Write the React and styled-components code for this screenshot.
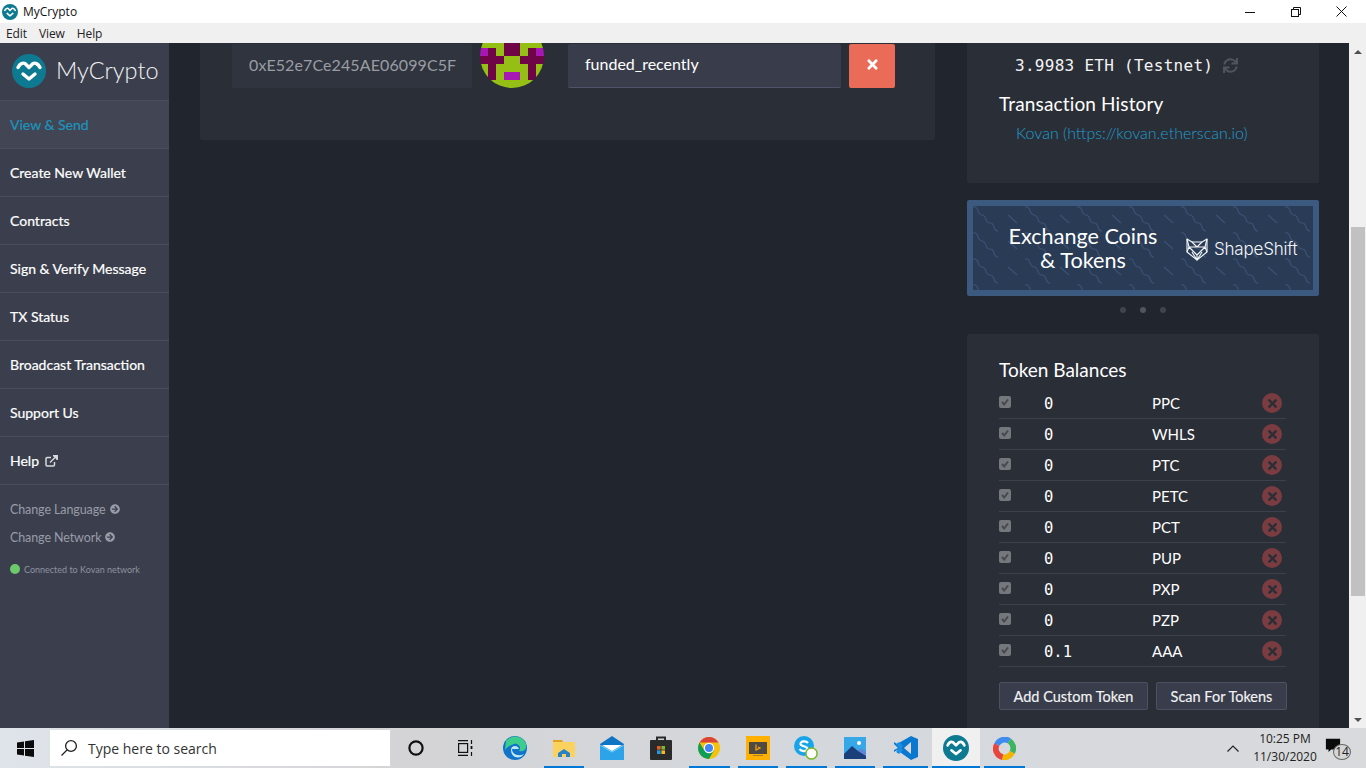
import React from "react";
import styled, { createGlobalStyle } from "styled-components";
import { FaTimes, FaSync, FaArrowCircleRight } from "react-icons/fa";

const GlobalStyle = createGlobalStyle`
  html, body {
    margin: 0;
    padding: 0;
    overflow: hidden;
    font-family: "Lato", "Liberation Sans", sans-serif;
  }
  * {
    box-sizing: border-box;
  }
`;

const Screen = styled.div`
  width: 1366px;
  height: 768px;
  display: flex;
  flex-direction: column;
  overflow: hidden;
  background: #21252d;
`;

const TitleBar = styled.div`
  height: 23px;
  flex: none;
  display: flex;
  align-items: center;
  background: #fff;
  padding: 0 2px 0 2px;
  color: #111;
  font: 12px "Open Sans", "Noto Sans", sans-serif;
`;

const TitleText = styled.span`
  margin-left: 5px;
  flex: 1;
`;

const WinButton = styled.div`
  width: 45.5px;
  height: 23px;
  display: flex;
  align-items: center;
  justify-content: center;
`;

const MenuBar = styled.div`
  height: 20px;
  flex: none;
  display: flex;
  align-items: center;
  gap: 12px;
  padding-left: 6px;
  background: #f0f0f0;
  color: #222;
  font: 12px "Open Sans", "Noto Sans", sans-serif;
  letter-spacing: -0.1px;
`;

const Body = styled.div`
  flex: 1;
  min-height: 0;
  display: flex;
`;

const Sidebar = styled.nav`
  width: 169px;
  flex: none;
  background: #3b3f4d;
`;

const Brand = styled.div`
  height: 58px;
  display: flex;
  align-items: center;
  gap: 10px;
  padding: 0 0 4px 12px;
  border-bottom: 1px solid #4a4e5c;
  color: #f2f2f4;
  font-size: 23.5px;
  font-weight: 300;
  svg {
    margin-top: 3px;
  }
`;

const NavItem = styled.div`
  height: 48px;
  display: flex;
  align-items: center;
  gap: 6px;
  padding-left: 10px;
  border-bottom: 1px solid #4a4e5c;
  font-size: 14px;
  -webkit-text-stroke: 0.2px currentColor;
  color: ${(p) => (p.$active ? "#1d94bd" : "#fff")};
  background: ${(p) => (p.$active ? "#424654" : "transparent")};
`;

const NavExtras = styled.div`
  padding: 10px 0 0 10px;
`;

const ExtraLink = styled.div`
  height: 28px;
  display: flex;
  align-items: center;
  gap: 4px;
  font-size: 12.5px;
  letter-spacing: -0.1px;
  color: #989ca8;
`;

const Status = styled.div`
  margin-top: 8px;
  height: 20px;
  display: flex;
  align-items: center;
  gap: 4px;
  font-size: 9px;
  color: #8e929f;
`;

const StatusDot = styled.span`
  width: 10px;
  height: 10px;
  border-radius: 50%;
  background: #6cc96c;
`;

const Main = styled.main`
  flex: 1;
  min-width: 0;
  overflow: hidden;
  padding: 0 14px 0 31px;
`;

const ScrollContent = styled.div`
  margin-top: -100px;
  display: grid;
  grid-template-columns: 735px 352px;
  column-gap: 32px;
  align-items: start;
`;

const Card = styled.section`
  background: #2a2e37;
  border-radius: 2px;
`;

const AddressCard = styled(Card)`
  padding: 81px 40px 52px 32px;
  display: flex;
  align-items: flex-end;
`;

const Field = styled.div`
  height: 44px;
  display: flex;
  align-items: center;
  padding-bottom: 4px;
  border-radius: 2px;
  font-size: 16px;
`;

const AddressField = styled(Field)`
  width: 240px;
  padding-left: 17px;
  background: #30343e;
  color: #9a9da3;
  letter-spacing: 0.1px;
  white-space: nowrap;
  overflow: hidden;
`;

const LabelField = styled(Field)`
  width: 273px;
  margin-left: 24px;
  padding-left: 17px;
  background: #393d4b;
  border-bottom: 1px solid #50546a;
  color: #fff;
`;

const Identicon = styled.svg`
  width: 64px;
  height: 64px;
  margin-left: 8px;
  flex: none;
  display: block;
`;

const RemoveButton = styled.button`
  width: 46px;
  height: 44px;
  margin-left: 8px;
  padding: 0 0 4px;
  border: 0;
  border-radius: 2px;
  background: #ea6b57;
  color: #fff;
  font-size: 15px;
  display: flex;
  align-items: center;
  justify-content: center;
`;

const Aside = styled.div`
  display: flex;
  flex-direction: column;
`;

const BalanceCard = styled(Card)`
  padding: 108px 32px 39px;
`;

const Balance = styled.div`
  height: 28px;
  padding-left: 16px;
  display: flex;
  align-items: center;
  gap: 10px;
  color: #f4f4f4;
  font: 16px "DejaVu Sans Mono", "Liberation Mono", monospace;
  letter-spacing: 0.28px;
  white-space: nowrap;
  svg {
    color: #50545d;
    font-size: 15px;
  }
`;

const Heading = styled.h3`
  margin: 0;
  color: #fff;
  font-size: 19px;
  font-weight: 400;
  line-height: 24px;
`;

const HistoryHeading = styled(Heading)`
  margin-top: 13px;
  letter-spacing: 0.15px;
`;

const ExplorerLink = styled.a`
  display: block;
  margin-top: 6px;
  padding-left: 17px;
  color: #1f9fd0;
  font-size: 16px;
  font-weight: 300;
  line-height: 22px;
`;

const Banner = styled.div`
  position: relative;
  margin-top: 17px;
  height: 96px;
  border: 6px solid #3c5a80;
  border-radius: 2px;
  background: #293b55;
  display: flex;
  align-items: center;
  overflow: hidden;
`;

const BannerPattern = styled.svg`
  position: absolute;
  inset: 0;
  width: 100%;
  height: 100%;
`;

const BannerText = styled.div`
  position: relative;
  width: 220px;
  text-align: center;
  color: #fff;
  font-size: 21.6px;
  line-height: 24px;
`;

const ShapeShift = styled.div`
  position: relative;
  display: flex;
  align-items: center;
  gap: 5px;
  margin: 2px 0 0 -8px;
  color: #f4f6f8;
  font: 300 17px "Inter", "Open Sans", sans-serif;
  letter-spacing: -0.2px;
`;

const Dots = styled.div`
  height: 38px;
  padding-bottom: 10px;
  display: flex;
  justify-content: center;
  align-items: center;
  gap: 14px;
`;

const Dot = styled.span`
  width: 6px;
  height: 6px;
  border-radius: 50%;
  background: ${(p) => (p.$on ? "#50555f" : "#3f444e")};
`;

const TokenCard = styled(Card)`
  padding: 24px 32px 20px;
`;

const TokenRow = styled.div`
  height: 31px;
  width: 287px;
  display: flex;
  align-items: center;
  border-bottom: 1px solid #3d414b;
  color: #fff;
`;

const TokenBox = styled.span`
  width: 12px;
  height: 12px;
  flex: none;
  margin-top: -2px;
  border-radius: 2px;
  background: #74777c;
  color: #464a50;
  display: flex;
  align-items: center;
  justify-content: center;
`;

const TokenValue = styled.span`
  width: 108px;
  margin: 1px 0 0 33px;
  font: 15.5px "DejaVu Sans Mono", "Liberation Mono", monospace;
`;

const TokenSymbol = styled.span`
  flex: 1;
  font-size: 15px;
`;

const TokenRemove = styled.span`
  width: 20px;
  height: 20px;
  margin-right: 4px;
  border-radius: 50%;
  background: #7a3c40;
  color: #2a2e37;
  font-size: 13px;
  display: flex;
  align-items: center;
  justify-content: center;
`;

const TokenHeading = styled(Heading)`
  margin-bottom: 6px;
`;

const TokenActions = styled.div`
  display: flex;
  gap: 8px;
  margin-top: 15px;
`;

const TokenButton = styled.button`
  height: 28px;
  width: ${(p) => p.$w}px;
  padding: 0;
  border: 1px solid #4c5060;
  border-radius: 2px;
  background: #393d4b;
  color: #f2f2f4;
  font: 14.5px "Lato", sans-serif;
  -webkit-text-stroke: 0.15px currentColor;
`;

const ScrollBar = styled.div`
  width: 17px;
  flex: none;
  display: flex;
  flex-direction: column;
  background: #f0f0f0;
`;

const ScrollArrow = styled.div`
  height: 17px;
  flex: none;
  display: flex;
  align-items: center;
  justify-content: center;
  &::after {
    content: "";
    border-left: 4px solid transparent;
    border-right: 4px solid transparent;
    ${(p) => (p.$down ? "border-top: 4px solid #505050;" : "border-bottom: 4px solid #505050;")}
  }
`;

const ScrollTrack = styled.div`
  flex: 1;
  padding: 167px 1px 0 2px;
`;

const ScrollThumb = styled.div`
  height: 369px;
  background: #c1c1c1;
`;

const TaskBar = styled.footer`
  height: 40px;
  flex: none;
  display: flex;
  align-items: stretch;
  background: linear-gradient(90deg, #dfe4ea 0%, #d4d4d6 30%, #d4d8dd 60%, #d9dadc 100%);
  font-family: "Open Sans", "Noto Sans", sans-serif;
`;

const StartButton = styled.div`
  width: 50px;
  flex: none;
  display: flex;
  align-items: center;
  justify-content: center;
`;

const SearchBox = styled.div`
  width: 340px;
  margin: 2px 0;
  flex: none;
  display: flex;
  align-items: center;
  gap: 10px;
  padding-left: 10px;
  background: #fff;
  color: #333;
  font-size: 14px;
`;

const TaskSlot = styled.div`
  width: ${(p) => p.$w || 48.5}px;
  flex: none;
  position: relative;
  display: flex;
  align-items: center;
  justify-content: center;
  background: ${(p) => (p.$focus ? "#f0f0f0" : "transparent")};
  &::after {
    content: "";
    display: ${(p) => (p.$run ? "block" : "none")};
    position: absolute;
    bottom: 0;
    left: ${(p) => (p.$focus ? 0 : 4)}px;
    right: ${(p) => (p.$focus ? 0 : 4)}px;
    height: 2px;
    background: #0078d7;
  }
`;

const TaskGroup = styled.div`
  display: flex;
  margin-left: ${(p) => p.$gap || 0}px;
`;

const Tray = styled.div`
  margin-left: auto;
  display: flex;
  align-items: center;
  padding-right: 17px;
  color: #222;
`;

const Clock = styled.div`
  width: 72px;
  margin: 0 4px 0 10px;
  text-align: center;
  font-size: 12px;
  line-height: 18px;
`;

const Notify = styled.div`
  position: relative;
  width: 24px;
  height: 24px;
`;

const NotifyBadge = styled.span`
  position: absolute;
  right: -2px;
  bottom: 0;
  width: 18px;
  height: 16px;
  border: 1px solid #666;
  border-radius: 50%;
  background: #d6d6d6;
  font-size: 12px;
  line-height: 14px;
  text-align: center;
`;

const ExternalIcon = () => (
  <svg width="13" height="12" viewBox="0 0 13 12" fill="none" stroke="#d8d9de" strokeWidth="1.5">
    <path d="M6 2.5H2.2Q1 2.5 1 3.7V9.8Q1 11 2.2 11H8.3Q9.5 11 9.5 9.8V7" />
    <path d="M5 7.5L11 1.5" />
    <path d="M8 .8H12.2V5" fill="#d8d9de" />
  </svg>
);

const Logo = ({ size = 34 }) => (
  <svg width={size} height={size} viewBox="0 0 34 34">
    <circle cx="17" cy="17" r="17" fill="#0e7a92" />
    <path
      d="M6 13.500C8 9.500 11 8.500 13 9.500L17 13.500L21 9.500C23 8.500 26 9.500 28 13.500"
      fill="none"
      stroke="#fff"
      strokeWidth="3.4"
      strokeLinecap="round"
      strokeLinejoin="round"
    />
    <path d="M11 20L17 25L23 20" fill="none" stroke="#fff" strokeWidth="3.4" strokeLinecap="round" strokeLinejoin="round" />
  </svg>
);

// g green, d dark, m magenta
const identiconRows = ["gggggggg", "gggddggg", "gggddggg", "mdgddgdm", "dddggddd", "gdggggdg", "gdgmmgdg", "gggggggg"];
const identiconColors = { g: "#95bf14", d: "#6f0447", m: "#a617b3" };

const IdenticonImage = () => (
  <Identicon viewBox="0 0 64 64">
    <defs>
      <clipPath id="identicon-clip">
        <circle cx="32" cy="32" r="32" />
      </clipPath>
    </defs>
    <g clipPath="url(#identicon-clip)" shapeRendering="crispEdges">
      {identiconRows.map((row, y) =>
        row.split("").map((c, x) => (
          <rect key={x + "-" + y} x={x * 8} y={y * 8} width="8" height="8" fill={identiconColors[c]} />
        ))
      )}
    </g>
  </Identicon>
);

const FoxLogo = () => (
  <svg width="24" height="24" viewBox="0 0 24 24" fill="none" stroke="#f4f6f8" strokeWidth="1.1" strokeLinejoin="round">
    <path d="M2 2L7 5H17L22 2V15L12 23L2 15Z" />
    <path d="M2 2L4 10L2 15M22 2L20 10L22 15M7 5L12 10L17 5M4 10L12 18L20 10M4 10L12 10L20 10M12 18V23M7 15L12 23L17 15" />
  </svg>
);

const WindowsIcon = () => (
  <svg width="17" height="17" viewBox="0 0 17 17" fill="#0b0b0b">
    <path d="M0 2.4L7 1.4V8H0ZM8 1.2L17 0V8H8ZM0 9H7V15.6L0 14.6ZM8 9H17V17L8 15.8Z" />
  </svg>
);

const SearchIcon = () => (
  <svg width="18" height="18" viewBox="0 0 18 18" fill="none" stroke="#222" strokeWidth="1.3">
    <circle cx="11" cy="7" r="5.4" />
    <path d="M7 11L1.5 16.5" />
  </svg>
);

const CortanaIcon = () => (
  <svg width="16" height="16" viewBox="0 0 16 16" fill="none" stroke="#111" strokeWidth="2.2">
    <circle cx="8" cy="8" r="6.6" />
  </svg>
);

const TaskViewIcon = () => (
  <svg width="16" height="16" viewBox="0 0 16 16" fill="none" stroke="#111" strokeWidth="1.2">
    <path d="M1 .6H11M1 15.4H11M14.5 0V4M14.5 12V16" />
    <rect x="1.6" y="3.6" width="9" height="8.8" />
    <rect x="13.6" y="6" width="1.8" height="3" fill="#111" stroke="none" />
  </svg>
);

const EdgeIcon = () => (
  <svg width="24" height="24" viewBox="0 0 24 24">
    <circle cx="12" cy="12" r="12" fill="#1173c9" />
    <path d="M3 5C7-1 19-2 23 8C24 14 20 16 16 15C19 11 15 7 11 8C7 9 4 11 2 14Z" fill="#3ccd8c" />
    <path d="M8 14C8 9 15 9 16 13H9C9 18 15 21 21 18C17 24 8 22 8 14Z" fill="#bfe9f5" />
  </svg>
);

const FolderIcon = () => (
  <svg width="22" height="20" viewBox="0 0 22 20">
    <path d="M0 2H9L10 4H0Z" fill="#e2a420" />
    <rect y="4" width="22" height="15" fill="#fbd25e" />
    <path d="M5 15L11 11L17 15V19H13V16H9V19H5Z" fill="#2a82c9" />
  </svg>
);

const MailIcon = () => (
  <svg width="24" height="24" viewBox="0 0 24 24">
    <path d="M0 8L12 0L24 8V24H0Z" fill="#0f74c4" />
    <path d="M0 10H24V24H0Z" fill="#2da4ea" />
    <path d="M2 9H22L12 15Z" fill="#fff" />
    <path d="M0 9L12 16L24 9" fill="none" stroke="#7fd0f7" />
  </svg>
);

const StoreIcon = () => (
  <svg width="22" height="24" viewBox="0 0 22 24">
    <path d="M7 5V1.5H15V5" fill="none" stroke="#2b2b2b" strokeWidth="2" />
    <rect y="4" width="22" height="20" rx="1" fill="#2b2b2b" />
    <rect x="7" y="10" width="3.6" height="3.6" fill="#e85a2c" />
    <rect x="11.4" y="10" width="3.6" height="3.6" fill="#7ab929" />
    <rect x="7" y="14.4" width="3.6" height="3.6" fill="#1e9be0" />
    <rect x="11.4" y="14.4" width="3.6" height="3.6" fill="#f6b81c" />
  </svg>
);

const ChromeIcon = () => (
  <svg width="22" height="22" viewBox="0 0 22 22">
    <circle cx="11" cy="11" r="11" fill="#f4c20d" />
    <path d="M1.5 5.5A11 11 0 0 1 20.5 5.5H11Z" fill="#db4437" />
    <path d="M1.5 5.5A11 11 0 0 0 11 22L16 13L6 13Z" fill="#0f9d58" />
    <circle cx="11" cy="11" r="5.2" fill="#fff" />
    <circle cx="11" cy="11" r="4" fill="#4285f4" />
  </svg>
);

const BingIcon = () => (
  <svg width="24" height="24" viewBox="0 0 24 24">
    <rect width="24" height="24" fill="#ffb000" />
    <rect x="3" y="6" width="18" height="12" fill="#4d4a45" />
    <rect x="7" y="19" width="10" height="1" fill="#a9812a" />
    <path d="M10 8.500V14L14 12L12 11" fill="none" stroke="#ffa500" strokeWidth="1.2" />
  </svg>
);

const SkypeIcon = () => (
  <svg width="24" height="24" viewBox="0 0 24 24">
    <circle cx="10" cy="10" r="10" fill="#18a4e8" />
    <path d="M14 7C12 4.500 6 5 6.500 8C7 11 13.500 9.500 13.500 13C13 16 7 15.500 5.500 13" fill="none" stroke="#fff" strokeWidth="2.2" />
    <circle cx="17.500" cy="17.500" r="5.600" fill="#fff" stroke="#7ab82a" strokeWidth="1.5" />
  </svg>
);

const PhotosIcon = () => (
  <svg width="22" height="22" viewBox="0 0 22 22">
    <rect width="22" height="22" fill="#36a8e8" />
    <circle cx="15" cy="6" r="2" fill="#fff" />
    <path d="M0 17L8 9L14 14L17 12L22 17V22H0Z" fill="#1b3f7a" />
    <path d="M14 14L17 11L22 15V19Z" fill="#5f87d6" />
  </svg>
);

const VSCodeIcon = () => (
  <svg width="24" height="24" viewBox="0 0 24 24">
    <path d="M17 0L24 3V21L17 24L3 14L0 16V14L4 12L0 8V6L3 8Z" fill="#0b78cf" />
    <path d="M17 6L10 12L17 18Z" fill="#d5d9de" />
    <path d="M2 8L5 6L9 10L7 12L9 14L5 18L2 16L5 12Z" fill="#1d8fe0" />
  </svg>
);

const RingIcon = () => (
  <svg width="23" height="23" viewBox="0 0 24 24" fill="none" strokeWidth="6">
    <path d="M4 8A9 9 0 0 1 17 4" stroke="#3f8cf0" />
    <path d="M17 4A9 9 0 0 1 20 16" stroke="#3db560" />
    <path d="M20 16A9 9 0 0 1 10 21" stroke="#f4b400" />
    <path d="M10 21A9 9 0 0 1 4 8" stroke="#e8453c" />
  </svg>
);

const navItems = ["View & Send", "Create New Wallet", "Contracts", "Sign & Verify Message", "TX Status", "Broadcast Transaction", "Support Us"];

const tokens = [
  ["0", "PPC"],
  ["0", "WHLS"],
  ["0", "PTC"],
  ["0", "PETC"],
  ["0", "PCT"],
  ["0", "PUP"],
  ["0", "PXP"],
  ["0", "PZP"],
  ["0.1", "AAA"],
];

export default function App() {
  return (
    <Screen>
      <GlobalStyle />
      <TitleBar>
        <Logo size={16} />
        <TitleText>MyCrypto</TitleText>
        <WinButton>
          <svg width="10" height="10" viewBox="0 0 10 10" stroke="#111">
            <path d="M0 5.500H10" />
          </svg>
        </WinButton>
        <WinButton>
          <svg width="10" height="10" viewBox="0 0 10 10" fill="none" stroke="#111">
            <rect x=".5" y="2.500" width="7" height="7" />
            <path d="M2.500 2.500V.5H9.500V7.500H7.500" />
          </svg>
        </WinButton>
        <WinButton>
          <svg width="11" height="11" viewBox="0 0 11 11" stroke="#111">
            <path d="M.5 .5L10.500 10.500M10.500 .5L.5 10.500" />
          </svg>
        </WinButton>
      </TitleBar>
      <MenuBar>
        <span>Edit</span>
        <span>View</span>
        <span>Help</span>
      </MenuBar>
      <Body>
        <Sidebar>
          <Brand>
            <Logo />
            MyCrypto
          </Brand>
          {navItems.map((item, i) => (
            <NavItem key={item} $active={i === 0}>
              {item}
            </NavItem>
          ))}
          <NavItem>
            Help <ExternalIcon />
          </NavItem>
          <NavExtras>
            <ExtraLink>
              Change Language <FaArrowCircleRight size={10} />
            </ExtraLink>
            <ExtraLink>
              Change Network <FaArrowCircleRight size={10} />
            </ExtraLink>
            <Status>
              <StatusDot />
              Connected to Kovan network
            </Status>
          </NavExtras>
        </Sidebar>
        <Main>
          <ScrollContent>
            <AddressCard>
              <AddressField>0xE52e7Ce245AE06099C5F</AddressField>
              <IdenticonImage />
              <LabelField>funded_recently</LabelField>
              <RemoveButton>
                <FaTimes />
              </RemoveButton>
            </AddressCard>
            <Aside>
              <BalanceCard>
                <Balance>
                  3.9983 ETH (Testnet) <FaSync />
                </Balance>
                <HistoryHeading>Transaction History</HistoryHeading>
                <ExplorerLink>Kovan (https://kovan.etherscan.io)</ExplorerLink>
              </BalanceCard>
              <Banner>
                <BannerPattern>
                  <defs>
                    <pattern id="waves" width="52" height="26" patternUnits="userSpaceOnUse">
                      <path
                        d="M0 1C7 0 3 8 9 9C15 10 11 17 17 17C23 17 19 25 25 25M35 9L44 17"
                        fill="none"
                        stroke="#3a5073"
                        strokeWidth="1.2"
                      />
                    </pattern>
                  </defs>
                  <rect width="100%" height="100%" fill="url(#waves)" />
                </BannerPattern>
                <BannerText>
                  Exchange Coins
                  <br />
                  &amp; Tokens
                </BannerText>
                <ShapeShift>
                  <FoxLogo />
                  ShapeShift
                </ShapeShift>
              </Banner>
              <Dots>
                <Dot />
                <Dot $on />
                <Dot />
              </Dots>
              <TokenCard>
                <TokenHeading>Token Balances</TokenHeading>
                {tokens.map(([value, symbol]) => (
                  <TokenRow key={symbol}>
                    <TokenBox>
                      <svg width="10" height="10" viewBox="0 0 10 10" fill="none" stroke="currentColor" strokeWidth="2">
                        <path d="M2 5L4.200 7.500L8 2.500" />
                      </svg>
                    </TokenBox>
                    <TokenValue>{value}</TokenValue>
                    <TokenSymbol>{symbol}</TokenSymbol>
                    <TokenRemove>
                      <FaTimes />
                    </TokenRemove>
                  </TokenRow>
                ))}
                <TokenActions>
                  <TokenButton $w={149}>Add Custom Token</TokenButton>
                  <TokenButton $w={131}>Scan For Tokens</TokenButton>
                </TokenActions>
              </TokenCard>
            </Aside>
          </ScrollContent>
        </Main>
        <ScrollBar>
          <ScrollArrow />
          <ScrollTrack>
            <ScrollThumb />
          </ScrollTrack>
          <ScrollArrow $down />
        </ScrollBar>
      </Body>
      <TaskBar>
        <StartButton>
          <WindowsIcon />
        </StartButton>
        <SearchBox>
          <SearchIcon />
          Type here to search
        </SearchBox>
        <TaskGroup $gap={2}>
          <TaskSlot>
            <CortanaIcon />
          </TaskSlot>
          <TaskSlot>
            <TaskViewIcon />
          </TaskSlot>
        </TaskGroup>
        <TaskGroup $gap={2}>
          <TaskSlot>
            <EdgeIcon />
          </TaskSlot>
          <TaskSlot $run>
            <FolderIcon />
          </TaskSlot>
          <TaskSlot>
            <MailIcon />
          </TaskSlot>
          <TaskSlot>
            <StoreIcon />
          </TaskSlot>
          <TaskSlot $run>
            <ChromeIcon />
          </TaskSlot>
          <TaskSlot $run>
            <BingIcon />
          </TaskSlot>
          <TaskSlot $run>
            <SkypeIcon />
          </TaskSlot>
          <TaskSlot $run>
            <PhotosIcon />
          </TaskSlot>
          <TaskSlot $run $w={53}>
            <VSCodeIcon />
          </TaskSlot>
          <TaskSlot $run $focus $w={48}>
            <Logo size={26} />
          </TaskSlot>
          <TaskSlot $run>
            <RingIcon />
          </TaskSlot>
        </TaskGroup>
        <Tray>
          <svg width="12" height="7" viewBox="0 0 12 7" fill="none" stroke="#222" strokeWidth="1.2">
            <path d="M.5 6.500L6 1L11.500 6.500" />
          </svg>
          <Clock>
            10:25 PM
            <br />
            11/30/2020
          </Clock>
          <Notify>
            <svg width="16" height="16" viewBox="0 0 18 18" fill="#0b0b0b">
              <path d="M1 2H17V14H7L4 17V14H1Z" />
            </svg>
            <NotifyBadge>14</NotifyBadge>
          </Notify>
        </Tray>
      </TaskBar>
    </Screen>
  );
}
